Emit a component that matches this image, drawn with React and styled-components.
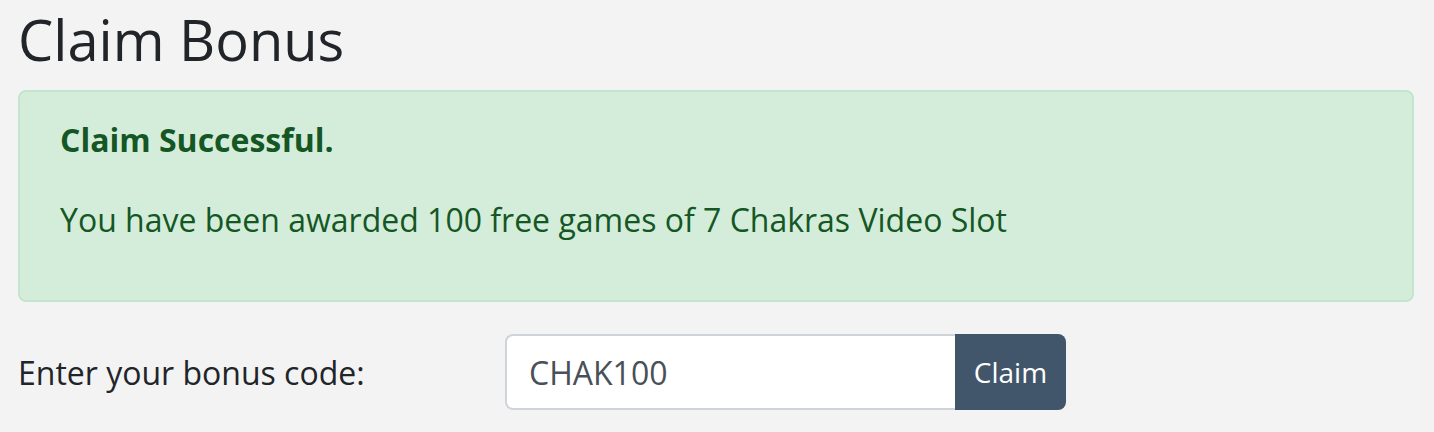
import React from 'react';
import styled, { createGlobalStyle } from 'styled-components';

const GlobalStyle = createGlobalStyle`
    body {
        margin: 0;
        background: #f3f3f3;
        font-family: "Open Sans", "Noto Sans", sans-serif;
        color: #212529;
    }
`

const App = () => {
    return (
        <Page>
            <GlobalStyle />
            <Title>Claim Bonus</Title>
            <Alert>
                <AlertHeading>Claim Successful.</AlertHeading>
                <AlertText>You have been awarded 100 free games of 7 Chakras Video Slot</AlertText>
            </Alert>
            <FormRow>
                <Label htmlFor="code">Enter your bonus code:</Label>
                <InputGroup>
                    <CodeInput id="code" defaultValue="CHAK100" />
                    <ClaimButton>Claim</ClaimButton>
                </InputGroup>
            </FormRow>
        </Page>
    )
}

const Page = styled.div`
    padding: 0 20px 0 18px;
`
const Title = styled.h2`
    margin: 0 0 17px;
    padding-top: 6px;
    font-size: 56px;
    font-weight: 400;
    line-height: 1.2;
    color: #212529;
`
const Alert = styled.div`
    background: #d4edda;
    border: 2px solid #c3e6cb;
    border-radius: 8px;
    padding: 24px 40px;
    color: #155724;
`
const AlertHeading = styled.h4`
    margin: 0 0 32px;
    font-size: 32px;
    font-weight: 700;
    line-height: 1.5;
`
const AlertText = styled.p`
    margin: 0 0 32px;
    font-size: 32px;
    line-height: 1.5;
`
const FormRow = styled.div`
    display: grid;
    grid-template-columns: 487px auto;
    align-items: center;
    margin-top: 32px;
`
const Label = styled.label`
    font-size: 32px;
    color: #212529;
`
const InputGroup = styled.div`
    display: flex;
    height: 76px;
`
const CodeInput = styled.input`
    box-sizing: border-box;
    width: 450px;
    height: 100%;
    padding: 0 22px;
    border: 2px solid #ced4da;
    border-right: none;
    border-radius: 8px 0 0 8px;
    background: #fff;
    font-family: "Open Sans", sans-serif;
    font-size: 32px;
    color: #495057;
    outline: none;
`
const ClaimButton = styled.button`
    width: 111px;
    height: 100%;
    border: none;
    border-radius: 0 8px 8px 0;
    background: #41566b;
    color: #fff;
    font-family: "Open Sans", sans-serif;
    font-size: 28px;
    padding: 0;
`

export default App
